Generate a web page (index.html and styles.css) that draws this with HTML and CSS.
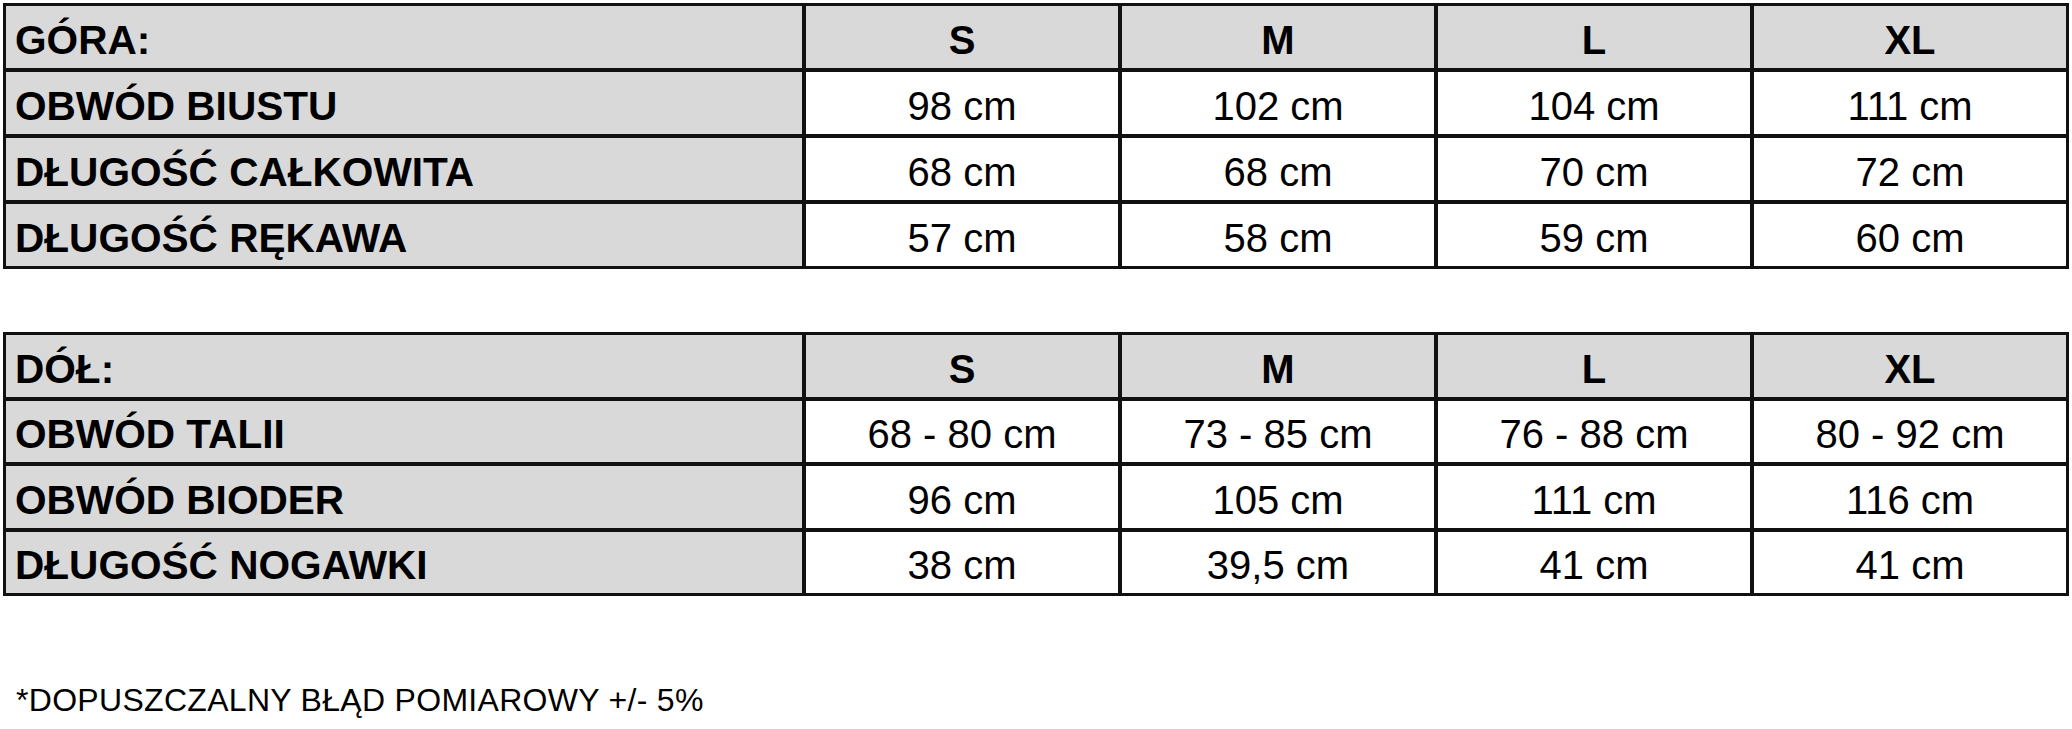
FILE: index.html
```html
<!DOCTYPE html>
<html lang="pl">
<head>
<meta charset="utf-8">
<title>Tabela rozmiarów</title>
<link rel="stylesheet" href="styles.css">
</head>
<body>
<div class="page">
  <div class="chart">
    <div class="cell label head">GÓRA:</div>
    <div class="cell size head">S</div>
    <div class="cell size head">M</div>
    <div class="cell size head">L</div>
    <div class="cell size head">XL</div>

    <div class="cell label">OBWÓD BIUSTU</div>
    <div class="cell value">98 cm</div>
    <div class="cell value">102 cm</div>
    <div class="cell value">104 cm</div>
    <div class="cell value">111 cm</div>

    <div class="cell label">DŁUGOŚĆ CAŁKOWITA</div>
    <div class="cell value">68 cm</div>
    <div class="cell value">68 cm</div>
    <div class="cell value">70 cm</div>
    <div class="cell value">72 cm</div>

    <div class="cell label">DŁUGOŚĆ RĘKAWA</div>
    <div class="cell value">57 cm</div>
    <div class="cell value">58 cm</div>
    <div class="cell value">59 cm</div>
    <div class="cell value">60 cm</div>
  </div>

  <div class="chart second">
    <div class="cell label head">DÓŁ:</div>
    <div class="cell size head">S</div>
    <div class="cell size head">M</div>
    <div class="cell size head">L</div>
    <div class="cell size head">XL</div>

    <div class="cell label">OBWÓD TALII</div>
    <div class="cell value">68 - 80 cm</div>
    <div class="cell value">73 - 85 cm</div>
    <div class="cell value">76 - 88 cm</div>
    <div class="cell value">80 - 92 cm</div>

    <div class="cell label">OBWÓD BIODER</div>
    <div class="cell value">96 cm</div>
    <div class="cell value">105 cm</div>
    <div class="cell value">111 cm</div>
    <div class="cell value">116 cm</div>

    <div class="cell label">DŁUGOŚĆ NOGAWKI</div>
    <div class="cell value">38 cm</div>
    <div class="cell value">39,5 cm</div>
    <div class="cell value">41 cm</div>
    <div class="cell value">41 cm</div>
  </div>

  <p class="note">*DOPUSZCZALNY BŁĄD POMIAROWY +/- 5%</p>
</div>
</body>
</html>
```

FILE: styles.css
```css
html, body {
  margin: 0;
  padding: 0;
  background: #ffffff;
}

body {
  font-family: "Liberation Sans", Arial, sans-serif;
  color: #000000;
}

.page {
  padding: 3px 0 0 3px;
}

.chart {
  display: grid;
  grid-template-columns: 796px repeat(4, 312px);
  grid-auto-rows: 62px;
  gap: 4px;
  padding: 3px;
  background: #111111;
  width: max-content;
}

.chart.second {
  margin-top: 63px;
  grid-auto-rows: 61.5px;
}

.cell {
  display: flex;
  align-items: center;
  font-size: 40px;
  line-height: 46px;
  padding-top: 6px;
  box-sizing: border-box;
  white-space: nowrap;
}

.label {
  background: #d9d9d9;
  font-weight: bold;
  font-size: 40.6px;
  padding-left: 9px;
}

.head {
  background: #d9d9d9;
  font-weight: bold;
}

.size,
.value {
  justify-content: center;
}

.value {
  background: #ffffff;
}

.note {
  margin: 86px 0 0 13px;
  font-size: 32px;
  line-height: 37px;
  letter-spacing: 0.3px;
}
```
